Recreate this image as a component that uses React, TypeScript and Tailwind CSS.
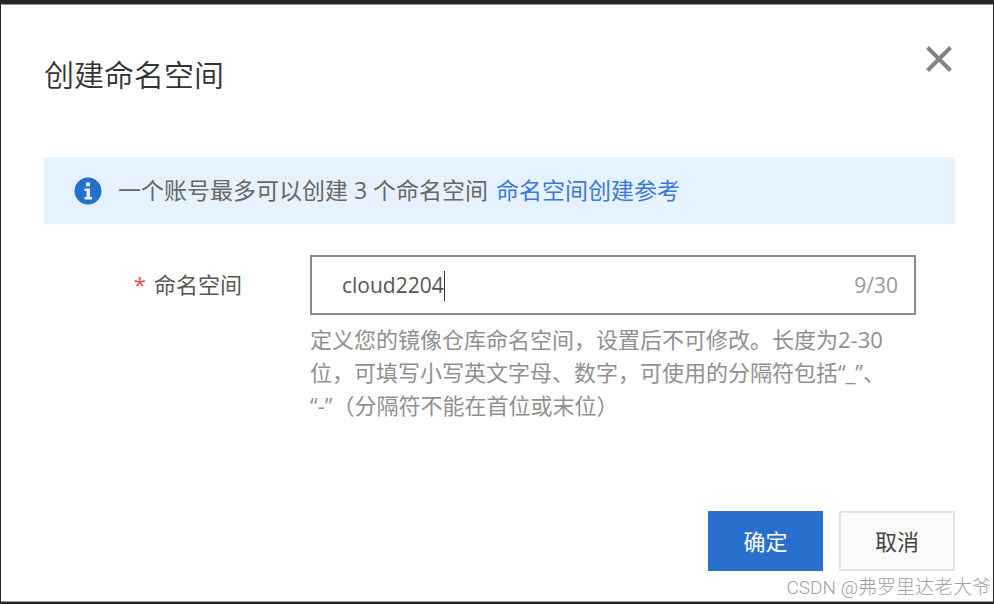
import { useState } from 'react';

const MAX_LENGTH = 30;

function InfoIcon() {
  return (
    <svg viewBox="0 0 28 28" className="size-7 shrink-0" aria-hidden="true">
      <circle cx="14" cy="14" r="13.5" fill="#2970ce" />
      <path d="M12 5.5h4v3.7h-4zM10.5 11.5h5.5v8.5h2v2.5h-7.5V20h2v-6h-2z" fill="#e6f2ff" />
    </svg>
  );
}

function CloseIcon() {
  return (
    <svg viewBox="0 0 28 28" className="size-7" aria-hidden="true">
      <path d="M2.5 2.5l23 23M25.5 2.5l-23 23" stroke="#838383" strokeWidth="4" fill="none" />
    </svg>
  );
}

export default function App() {
  const [name, setName] = useState('cloud2204');

  return (
    <div
      lang="zh-CN"
      className="relative flex min-h-screen flex-col bg-[#272727] px-px pt-1 pb-[2px] font-['Open_Sans','Noto_Sans_CJK_SC',sans-serif] text-[#555]"
    >
      <form
        role="dialog"
        aria-labelledby="dialog-title"
        className="flex flex-1 flex-col border-y border-[#999] bg-white pr-[38px] pl-[43px]"
        onSubmit={(e) => e.preventDefault()}
      >
        <header className="flex items-start justify-between pt-10">
          <h1 id="dialog-title" className="pt-2 text-[30px] leading-[44px] font-[350] text-[#333]">
            创建命名空间
          </h1>
          <button type="button" aria-label="关闭" className="mr-[2px]">
            <CloseIcon />
          </button>
        </header>

        <div className="mt-[60px] flex min-h-[67px] items-center bg-[#e6f2ff] pl-[30px] text-[23px] leading-[33px]">
          <InfoIcon />
          <p className="ml-4 text-[#666]">一个账号最多可以创建 3 个命名空间</p>
          <a href="#" className="ml-2 text-[#3b78d8]">
            命名空间创建参考
          </a>
        </div>

        <div className="mt-[31px] flex items-start pr-[39px]">
          <label
            htmlFor="namespace"
            className="flex w-[198px] shrink-0 items-center justify-end gap-2 text-[22px] leading-[58px]"
          >
            <span className="text-[#d9534f]">*</span>
            命名空间
          </label>
          <div className="ml-[68px] min-w-0 flex-1">
            <div className="flex h-[60px] items-center border-2 border-[#8a8a8a] pt-[2px] pr-4 pl-[30px] text-[21px]">
              <input
                id="namespace"
                type="text"
                value={name}
                maxLength={MAX_LENGTH}
                onChange={(e) => setName(e.target.value)}
                className="field-sizing-content min-w-0 caret-transparent outline-none"
              />
              <span className="h-[30px] w-px shrink-0 bg-[#333]" />
              <span className="ml-auto text-[#999]">
                {name.length}/{MAX_LENGTH}
              </span>
            </div>
            <p className="mt-2 text-[22px] leading-[33px] text-[#909090] [text-spacing-trim:space-all]">
              定义您的镜像仓库命名空间，设置后不可修改。长度为2-30
              <br />
              位，可填写小写英文字母、数字，可使用的分隔符包括“_”、
              <br />
              “-”（分隔符不能在首位或末位）
            </p>
          </div>
        </div>

        <footer className="mt-auto flex justify-end gap-4 pb-[30px] text-[22px]">
          <button type="submit" className="h-[60px] w-[115px] bg-[#2970ce] text-white">
            确定
          </button>
          <button type="button" className="h-[60px] w-[116px] border-2 border-[#e3e3e3] bg-[#fafafa] text-[#444]">
            取消
          </button>
        </footer>
      </form>

      <span className="absolute right-[3px] bottom-[3px] font-['Roboto','Noto_Sans_CJK_SC',sans-serif] text-[19px] leading-[26px] font-light text-[#a0a0a0]">
        CSDN @弗罗里达老大爷
      </span>
    </div>
  );
}
